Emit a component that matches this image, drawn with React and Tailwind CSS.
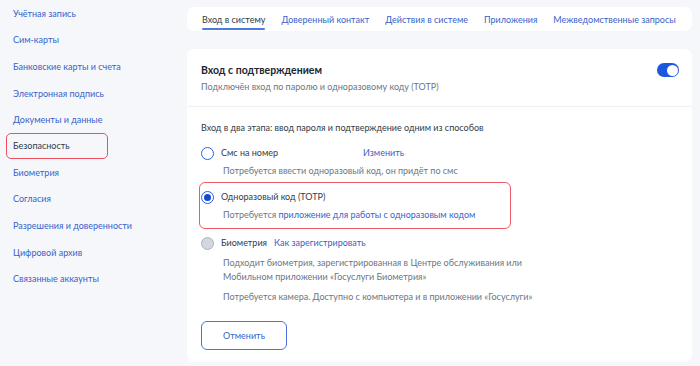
import React from "react";

const side = [
  "Учётная запись",
  "Сим-карты",
  "Банковские карты и счета",
  "Электронная подпись",
  "Документы и данные",
  "Безопасность",
  "Биометрия",
  "Согласия",
  "Разрешения и доверенности",
  "Цифровой архив",
  "Связанные аккаунты",
];

const tabs = ["Вход в систему", "Доверенный контакт", "Действия в системе", "Приложения", "Межведомственные запросы"];

export default function App() {
  return (
    <div
      className="w-[700px] h-[366px] overflow-hidden bg-[#f5f7fb] flex text-[9px] text-[#0b1f33] whitespace-nowrap"
      style={{ fontFamily: "Lato, 'Open Sans', sans-serif" }}
    >
      <div className="w-[187px] shrink-0 pt-0 pl-[6px] flex flex-col">
        {side.map((s, i) =>
          s === "Безопасность" ? (
            <div
              key={s}
              className="w-[102px] h-[26px] border-[1.5px] border-[#ef4f5f] rounded-[5px] flex items-center pl-[6px] text-[#333a44] leading-none"
            >
              {s}
            </div>
          ) : (
            <div key={s} className="h-[26.6px] flex items-center pl-[7px] text-[#3a5fc8] leading-none">
              {s}
            </div>
          )
        )}
      </div>
      <div className="w-[505px] pt-[7px] flex flex-col">
        <div className="h-[24px] bg-white rounded-[7px] flex items-stretch pl-[15px] gap-[16px]">
          {tabs.map((t, i) => (
            <div
              key={t}
              className={
                "flex items-center leading-none relative " + (i === 0 ? "text-[#333a44]" : "text-[#3a5fc8]")
              }
            >
              {t}
              {i === 0 && <div className="absolute left-0 right-0 bottom-[1px] h-[2px] bg-[#4e7ae0] rounded" />}
            </div>
          ))}
        </div>
        <div className="mt-[18px] bg-white rounded-[7px] h-[313px] flex flex-col">
          <div className="h-[58px] border-b border-[#eef1f7] flex justify-between pl-[14px] pr-[13px] pt-[14px]">
            <div className="flex flex-col">
              <div className="text-[10.5px] font-bold text-[#1d2633] leading-[14px]">Вход с подтверждением</div>
              <div className="mt-[3px] text-[#6b7684] leading-[14px]">Подключён вход по паролю и одноразовому коду (TOTP)</div>
            </div>
            <div className="w-[22px] h-[14px] rounded-full bg-[#1c57e0] flex items-center justify-end pr-[1.5px]">
              <div className="w-[11px] h-[11px] rounded-full bg-white" />
            </div>
          </div>
          <div className="pl-[14px] pt-[14px] flex flex-col">
            <div className="leading-[14px] text-[#333a44]">Вход в два этапа: ввод пароля и подтверждение одним из способов</div>
            <div className="mt-[11px] flex items-center h-[14px]">
              <div className="w-[13px] h-[13px] rounded-full border-[1.5px] border-[#2f5fd9] bg-white" />
              <span className="ml-[7px] w-[142px] text-[#333a44]">Смс на номер</span>
              <span className="text-[#3a5fc8]">Изменить</span>
            </div>
            <div className="mt-[4px] ml-[22px] text-[#6b7684] leading-[14px]">Потребуется ввести одноразовый код, он придёт по смс</div>
            <div className="mt-[4px] -ml-[2px] w-[312px] h-[47px] border-[1.5px] border-[#ef5a66] rounded-[6px] pl-[1px] pt-[7px] flex flex-col">
              <div className="flex items-center h-[14px]">
                <div className="w-[13px] h-[13px] rounded-full border-[1.5px] border-[#2f5fd9] bg-white flex items-center justify-center">
                  <div className="w-[7px] h-[7px] rounded-full bg-[#1448d1]" />
                </div>
                <span className="ml-[7px] text-[#333a44]">Одноразовый код (TOTP)</span>
              </div>
              <div className="mt-[4px] ml-[22px] text-[#6b7684] leading-[14px]">
                Потребуется <span className="text-[#3a5fc8]">приложение для работы с одноразовым кодом</span>
              </div>
            </div>
            <div className="mt-[7px] flex items-center h-[14px]">
              <div className="w-[13px] h-[13px] rounded-full border border-[#a9b2be] bg-[#d3d8df]" />
              <span className="ml-[7px] text-[#333a44]">Биометрия</span>
              <span className="ml-[7px] text-[#3a5fc8]">Как зарегистрировать</span>
            </div>
            <div className="mt-[6px] ml-[22px] text-[#6b7684] leading-[14px]">
              <div>Подходит биометрия, зарегистрированная в Центре обслуживания или</div>
              <div>Мобильном приложении «Госуслуги Биометрия»</div>
            </div>
            <div className="mt-[6px] ml-[22px] text-[#6b7684] leading-[14px]">
              Потребуется камера. Доступно с компьютера и в приложении «Госуслуги»
            </div>
            <div className="mt-[17px] w-[86px] h-[29px] border-[1.5px] border-[#4a73dc] rounded-[6px] flex items-center justify-center text-[#3a5fc8]">
              Отменить
            </div>
          </div>
        </div>
      </div>
    </div>
  );
}
